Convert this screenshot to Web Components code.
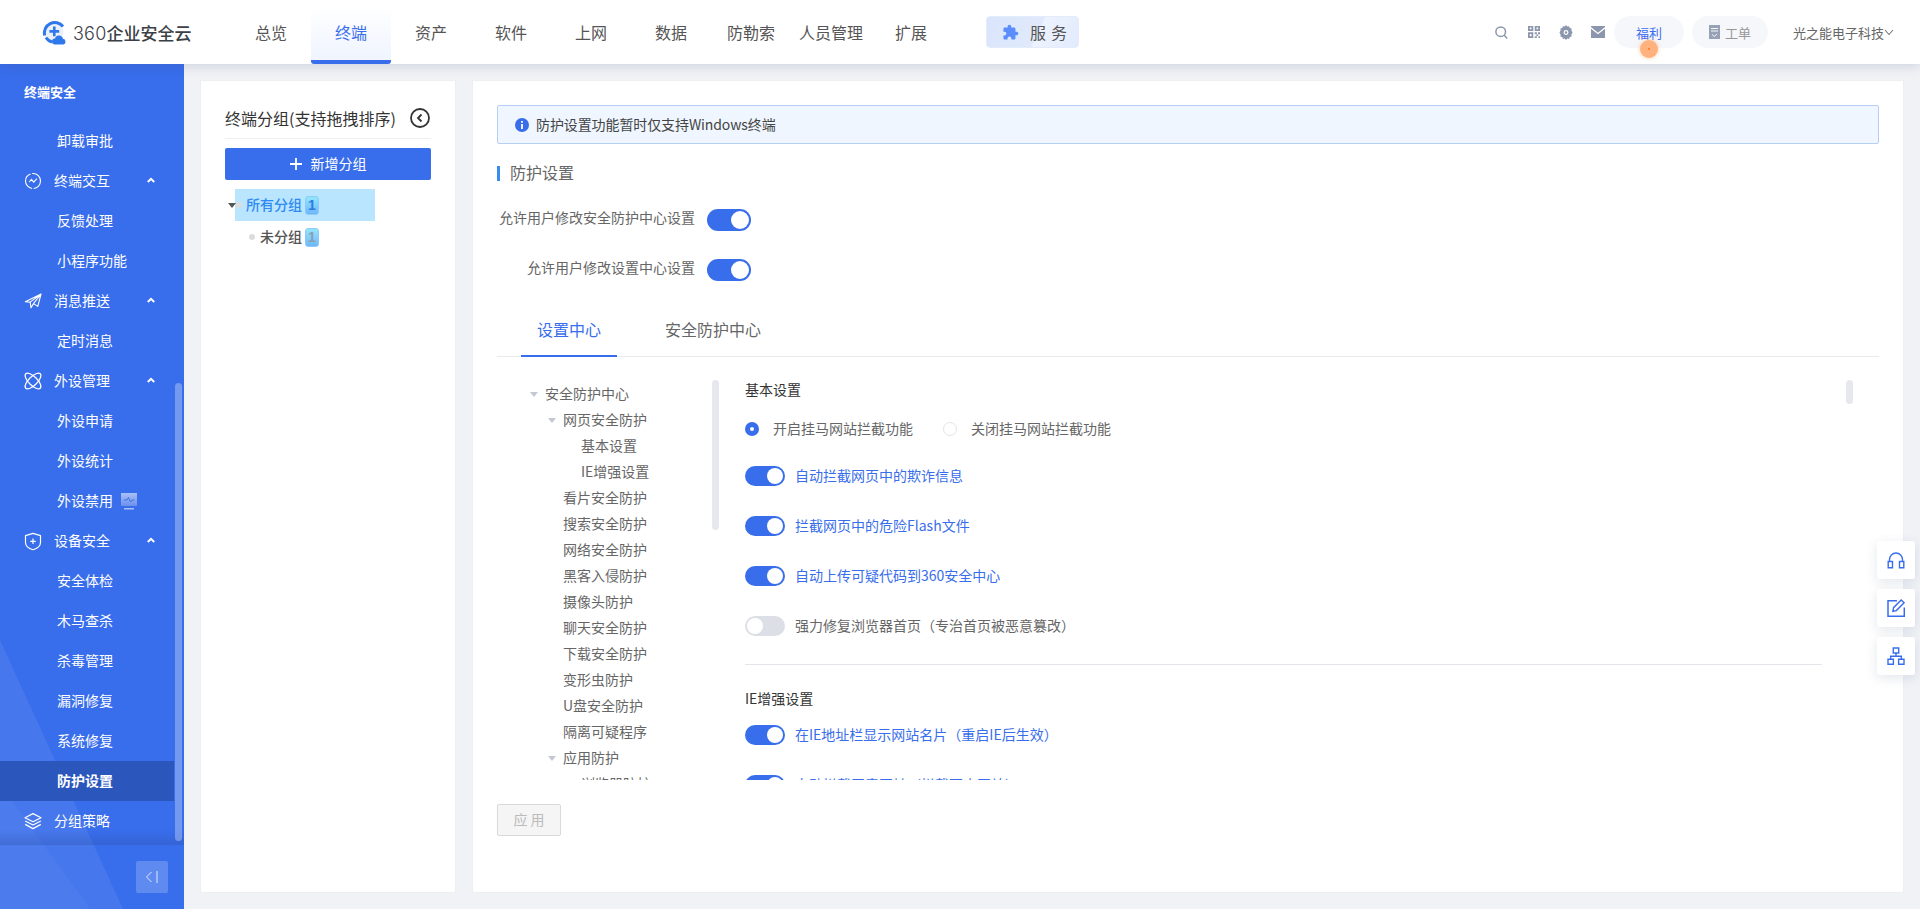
<!DOCTYPE html>
<html lang="zh-CN">
<head>
<meta charset="utf-8">
<title>360企业安全云</title>
<style>
  html, body { margin: 0; height: 100%; overflow: hidden; }
  body {
    font-family: "Noto Sans CJK SC", "Noto Sans", "Liberation Sans", sans-serif;
    font-size: 14px;
    color: #666;
    background: #f0f2f6;
  }
</style>
</head>
<body>
<app-shell>
  <top-bar slot="top">
    <nav-tab>总览</nav-tab>
    <nav-tab active>终端</nav-tab>
    <nav-tab>资产</nav-tab>
    <nav-tab>软件</nav-tab>
    <nav-tab>上网</nav-tab>
    <nav-tab>数据</nav-tab>
    <nav-tab>防勒索</nav-tab>
    <nav-tab>人员管理</nav-tab>
    <nav-tab>扩展</nav-tab>
  </top-bar>

  <side-bar slot="side">
    <side-title>终端安全</side-title>
    <side-item>卸载审批</side-item>
    <side-group icon="pulse">终端交互</side-group>
    <side-item>反馈处理</side-item>
    <side-item>小程序功能</side-item>
    <side-group icon="plane">消息推送</side-group>
    <side-item>定时消息</side-item>
    <side-group icon="atom">外设管理</side-group>
    <side-item>外设申请</side-item>
    <side-item>外设统计</side-item>
    <side-item monitor>外设禁用</side-item>
    <side-group icon="shield">设备安全</side-group>
    <side-item>安全体检</side-item>
    <side-item>木马查杀</side-item>
    <side-item>杀毒管理</side-item>
    <side-item>漏洞修复</side-item>
    <side-item>系统修复</side-item>
    <side-item active>防护设置</side-item>
    <side-group icon="layers" flat>分组策略</side-group>
  </side-bar>

  <group-panel>
    <group-row selected caret>所有分组</group-row>
    <group-row>未分组</group-row>
  </group-panel>

  <settings-panel>
    <notice-bar>防护设置功能暂时仅支持Windows终端</notice-bar>
    <section-head>防护设置</section-head>
    <label-switch>允许用户修改安全防护中心设置</label-switch>
    <label-switch>允许用户修改设置中心设置</label-switch>

    <tab-strip>
      <strip-tab active>设置中心</strip-tab>
      <strip-tab>安全防护中心</strip-tab>
    </tab-strip>

    <split-view>
      <tree-row slot="tree" caret>安全防护中心</tree-row>
      <tree-row slot="tree" level="1" caret>网页安全防护</tree-row>
      <tree-row slot="tree" level="2">基本设置</tree-row>
      <tree-row slot="tree" level="2">IE增强设置</tree-row>
      <tree-row slot="tree" level="1">看片安全防护</tree-row>
      <tree-row slot="tree" level="1">搜索安全防护</tree-row>
      <tree-row slot="tree" level="1">网络安全防护</tree-row>
      <tree-row slot="tree" level="1">黑客入侵防护</tree-row>
      <tree-row slot="tree" level="1">摄像头防护</tree-row>
      <tree-row slot="tree" level="1">聊天安全防护</tree-row>
      <tree-row slot="tree" level="1">下载安全防护</tree-row>
      <tree-row slot="tree" level="1">变形虫防护</tree-row>
      <tree-row slot="tree" level="1">U盘安全防护</tree-row>
      <tree-row slot="tree" level="1">隔离可疑程序</tree-row>
      <tree-row slot="tree" level="1" caret>应用防护</tree-row>
      <tree-row slot="tree" level="2">浏览器防护</tree-row>

      <form-title>基本设置</form-title>
      <radio-row>
        <radio-item checked>开启挂马网站拦截功能</radio-item>
        <radio-item>关闭挂马网站拦截功能</radio-item>
      </radio-row>
      <option-row>自动拦截网页中的欺诈信息</option-row>
      <option-row>拦截网页中的危险Flash文件</option-row>
      <option-row>自动上传可疑代码到360安全中心</option-row>
      <option-row off>强力修复浏览器首页（专治首页被恶意篡改）</option-row>
      <form-rule></form-rule>
      <form-title second>IE增强设置</form-title>
      <option-row>在IE地址栏显示网站名片（重启IE后生效）</option-row>
      <option-row>自动拦截恶意网址（拦截不良网站）</option-row>
    </split-view>

    <apply-button>应 用</apply-button>
  </settings-panel>
</app-shell>

<float-tools>
  <float-tool icon="headset"></float-tool>
  <float-tool icon="edit"></float-tool>
  <float-tool icon="org"></float-tool>
</float-tools>

<script>
const ICONS = {
  pulse: '<circle cx="8" cy="8" r="7.500" fill="none" stroke="currentColor" stroke-width="1.100" stroke-dasharray="11 1.600 20 1.600 13"/><path d="M4.200 9l2.300-2.600 2.200 2.700 3.200-3.400" fill="none" stroke="currentColor" stroke-width="1.100"/>',
  plane: '<path d="M.3 8.700L16 1l-3.200 12.400-4.300-2.800L6 14.800l-.8-5.700zM5.200 9.100L16 1M8.500 10.600L16 1" fill="none" stroke="currentColor" stroke-width="1.100" stroke-linejoin="round"/>',
  atom: '<g fill="none" stroke="currentColor" stroke-width="1.200"><ellipse cx="8" cy="8" rx="4.300" ry="10.300" transform="rotate(45 8 8)"/><ellipse cx="8" cy="8" rx="4.300" ry="10.300" transform="rotate(-45 8 8)"/></g>',
  shield: '<path d="M8 .4l7.500 2.200v6.900c0 3.200-3.200 5.900-7.500 7.200C3.700 15.400.5 12.700.5 9.500V2.600zM8 5.500v5.600M5.200 8.300h5.600" fill="none" stroke="currentColor" stroke-width="1.200" stroke-linejoin="round"/>',
  layers: '<path d="M8 .6l8 4.100-8 4.100-8-4.100zM.2 8L8 12l7.800-4M.2 11.400L8 15.600l7.800-4.200" fill="none" stroke="currentColor" stroke-width="1.200" stroke-linejoin="round"/>',
  headset: '<path d="M2.500 11V8.500a6.500 6.500 0 0 1 13 0V11" fill="none" stroke="currentColor" stroke-width="1.400"/><path d="M1.200 10.500h4.300v6.200H1.200zM12.500 10.500h4.300v6.200h-4.300z" fill="none" stroke="currentColor" stroke-width="1.400"/>',
  edit: '<path d="M10 1.700H1v15.600h16.300V8.500" fill="none" stroke="currentColor" stroke-width="1.500"/><path d="M14.200.9l2.900 2.900-7.700 7.800-3.500.7.600-3.600z" fill="none" stroke="currentColor" stroke-width="1.400"/>',
  org: '<path d="M6.300 1h5.400v5H6.300zM1 12.200h5.400v5H1zM11.600 12.200H17v5h-5.400zM9 6v3.200M3.700 12.200V9.200h10.600v3" fill="none" stroke="currentColor" stroke-width="1.400"/>'
};

class ShadowBase extends HTMLElement {
  constructor() {
    super();
    this.attachShadow({ mode: 'open' });
    this.shadowRoot.innerHTML = this.render();
  }
  render() {
    return '<slot></slot>';
  }
}

class AppShell extends ShadowBase {
  render() {
    return `
    <style>
      :host { display: grid; grid-template: 64px 1fr / 184px 1fr; height: 909px; }
      .top { grid-column: 1 / 3; position: relative; z-index: 3; }
      .side { display: block; height: 845px; }
      main { display: flex; gap: 16px; padding: 16px; min-width: 0; }
    </style>
    <div class="top"><slot name="top"></slot></div>
    <div class="side"><slot name="side"></slot></div>
    <main><slot></slot></main>
    `;
  }
}

class TopBar extends ShadowBase {
  render() {
    return `
    <style>
      :host {
        display: flex;
        align-items: center;
        height: 64px;
        background: #fff;
        box-shadow: 0 3px 10px rgba(70, 85, 120, 0.18);
      }
      .logo { width: 231px; padding-left: 42px; box-sizing: border-box; display: flex; align-items: center; gap: 6px; }
      .logo b { font-weight: 500; font-size: 17px; color: #3b3f46; white-space: nowrap; }
      .logo em { font: 300 18px Inter, "Liberation Sans", sans-serif; letter-spacing: 0.2px; }
      nav { display: flex; align-self: stretch; }
      .service {
        display: flex; align-items: center; gap: 11px;
        margin-left: 35px; height: 32px; width: 93px; padding-left: 15px;
        box-sizing: border-box; border: 1px solid #e4ecfc; border-radius: 4px;
        background: linear-gradient(115deg, #d9e5fc 0%, #e1eafc 55%, #edf3fe 56%, #e2ebfd 100%);
        font-size: 16px; letter-spacing: 5px; color: #555;
      }
      .grow { flex: 1; }
      .tool { width: 32px; display: flex; justify-content: center; color: #8c96ad; }
      .pill {
        position: relative; display: flex; align-items: center; justify-content: center; gap: 5px;
        height: 32px; border-radius: 16px; background: #f5f7fa; font-size: 13px; color: #999;
      }
      .gift { width: 70px; color: #3d6cf0; }
      .ticket { width: 76px; margin-left: 8px; }
      .dot {
        position: absolute; left: 26px; top: 24px; width: 18px; height: 18px; border-radius: 50%;
        background: #ffb27e; box-shadow: 0 0 4px rgba(255, 170, 110, 0.6);
        display: flex; align-items: center; justify-content: center;
      }
      .dot i { width: 2px; height: 2px; background: #f57a20; border-radius: 50%; }
      .user { margin: 0 26px 0 25px; display: flex; align-items: center; font-size: 13px; color: #666; white-space: nowrap; }
    </style>
    <div class="logo">
      <svg width="25" height="25" viewBox="0 0 25 25">
        <circle cx="11.500" cy="11.500" r="10" fill="#eaeff8"/>
        <path d="M2.600 15.500A10.500 10.500 0 0 1 21 6.500" fill="none" stroke="#2f78ec" stroke-width="3"/>
        <path d="M4 17.500a10 10 0 0 0 6 4.500" fill="none" stroke="#2f78ec" stroke-width="3"/>
        <path d="M11 6.500h2.600v3.600h3.600v2.600h-3.600v3.600H11v-3.600H7.400v-2.600H11z" fill="#2f78ec"/>
        <path d="M13 24.500a3 3 0 0 1 0-6c.6-2 2.200-3.200 4-3 2.200 0 3.600 1.300 4 3.200a3 3 0 0 1 .5 5.800z" fill="#2f78ec"/>
      </svg>
      <b><em>360</em>企业安全云</b>
    </div>
    <nav><slot></slot></nav>
    <div class="service">
      <svg width="17" height="17" viewBox="0 0 24 24" fill="#5b8dfb"><path d="M20.500 11H19V7c0-1.100-.9-2-2-2h-4V3.500C13 2.120 11.880 1 10.500 1S8 2.120 8 3.500V5H4c-1.100 0-1.990.9-1.990 2v3.800H3.500c1.490 0 2.700 1.210 2.700 2.700s-1.210 2.700-2.700 2.700H2V20c0 1.100.9 2 2 2h3.800v-1.500c0-1.490 1.210-2.700 2.700-2.700 1.490 0 2.700 1.210 2.700 2.700V22H17c1.100 0 2-.9 2-2v-4h1.500c1.380 0 2.500-1.120 2.500-2.500S21.880 11 20.500 11z"/></svg>
      <span>服务</span>
    </div>
    <div class="grow"></div>
    <div class="tool">
      <svg width="13" height="13" viewBox="0 0 13 13" fill="none" stroke="currentColor" stroke-width="1.500"><circle cx="5.700" cy="5.700" r="4.800"/><path d="M9 9l3.200 3.400"/></svg>
    </div>
    <div class="tool">
      <svg width="12" height="12" viewBox="0 0 12 14" preserveAspectRatio="none" fill="currentColor"><path d="M0 0h5.300v5.700H0zM1.800 1.800v2.100h1.700V1.800zM6.700 0H12v5.700H6.700zM8.500 1.800v2.100h1.700V1.800zM0 7.300h5.300V14H0zM1.800 9.300v2.700h1.700V9.300zM6.700 7.300h2.200v2.400H6.700zM10 7.300h2v2.400h-2zM8.400 10h1.800v1.800H8.400zM6.700 12h2.200v2H6.700zM10.400 12H12v2h-1.600z" fill-rule="evenodd"/></svg>
    </div>
    <div class="tool">
      <svg width="14" height="15" viewBox="0 0 14 16"><path d="M7 0l1.300 1.600 2-.4.7 1.900 2 .6-.3 2L14 8l-1.300 2.300.3 2-2 .6-.7 1.900-2-.4L7 16l-1.300-1.600-2 .4-.7-1.900-2-.6.3-2L0 8l1.300-2.300-.3-2 2-.6.700-1.900 2 .4z" fill="currentColor"/><circle cx="7" cy="8" r="2.600" fill="#fff"/><circle cx="7" cy="8" r="1.300" fill="currentColor"/></svg>
    </div>
    <div class="tool">
      <svg width="14" height="12" viewBox="0 0 14 12" fill="currentColor"><path d="M0 0h14v1L7 6.700 0 1zM0 2.700l7 5.600 7-5.600V12H0z"/><path d="M0 10.600h14V12H0z" opacity=".6"/></svg>
    </div>
    <div class="pill gift">福利<span class="dot"><i></i></span></div>
    <div class="pill ticket">
      <svg width="11" height="14" viewBox="0 0 11 14"><path d="M0 0h11v14H0z" fill="#98a2b6"/><path d="M2 3.500h7M2 6h7M3 9.500l2.300 2L8 9" fill="none" stroke="#f5f7fa" stroke-width="1"/></svg>
      <span>工单</span>
    </div>
    <div class="user">光之能电子科技
      <svg width="10" height="7" viewBox="0 0 10 7" fill="none" stroke="#777" stroke-width="1.100"><path d="M1 1l4 4.500L9 1"/></svg>
    </div>
    `;
  }
}

class NavTab extends ShadowBase {
  render() {
    const active = this.hasAttribute('active');
    return `
    <style>
      :host {
        display: flex; align-items: center; justify-content: center;
        box-sizing: border-box; width: 80px; height: 64px;
        font-size: 16px; white-space: nowrap; color: #555;
        ${active ? `color: #386deb; border-bottom: 4px solid #386deb; padding-top: 4px;
          border-radius: 0 0 3px 3px; background: linear-gradient(180deg, #fff 10%, #eff4ff 100%);` : ''}
      }
    </style>
    <slot></slot>
    `;
  }
}

class SideBar extends ShadowBase {
  render() {
    return `
    <style>
      :host {
        display: flex; flex-direction: column; position: relative;
        height: 845px; background: #386deb; overflow: hidden;
      }
      .art { position: absolute; left: 0; top: 0; }
      .list { position: relative; height: 781px; overflow: hidden; }
      .fade {
        position: absolute; left: 0; right: 0; top: 766px; height: 15px;
        background: linear-gradient(180deg, rgba(44, 80, 170, 0), rgba(44, 80, 170, 0.35));
      }
      .thumb {
        position: absolute; left: 175px; top: 319px; width: 7px; height: 458px;
        border-radius: 4px; background: rgba(255, 255, 255, 0.3);
      }
      .foot { position: relative; flex: 1; display: flex; justify-content: flex-end; padding: 16px 16px 0 0; }
      .fold {
        display: flex; align-items: center; justify-content: center;
        width: 32px; height: 32px; border-radius: 2px; background: rgba(255, 255, 255, 0.2);
      }
    </style>
    <svg class="art" width="184" height="845"><path d="M0 576L123 845H0z" fill="rgba(255,255,255,.07)"/><path d="M0 720L90 845H0z" fill="rgba(255,255,255,.03)"/></svg>
    <div class="list"><slot></slot><div class="fade"></div><div class="thumb"></div></div>
    <div class="foot">
      <div class="fold">
        <svg width="14" height="12" viewBox="0 0 14 12" fill="none" stroke="#dfe8ff" stroke-width="1"><path d="M6.500 1L1.500 6l5 5M12 0v12"/></svg>
      </div>
    </div>
    `;
  }
}

class SideTitle extends ShadowBase {
  render() {
    return `
    <style>
      :host { display: block; height: 57px; line-height: 56px; padding-left: 24px; font-size: 13px; font-weight: 700; color: #fff; }
    </style>
    <slot></slot>
    `;
  }
}

class SideItem extends ShadowBase {
  render() {
    const active = this.hasAttribute('active');
    const monitor = this.hasAttribute('monitor') ? `
      <svg class="mon" width="16" height="17" viewBox="0 0 16 17">
        <defs><linearGradient id="m" x1="0" y1="0" x2="0" y2="1"><stop offset="0" stop-color="#a9c0f7"/><stop offset="1" stop-color="#6b90ee"/></linearGradient></defs>
        <path d="M0 0h16v13H0z" fill="url(#m)"/><path d="M3 15h10v1.500H3z" fill="#a9c0f7"/>
        <path d="M3 7h3l1.500-2.500L9.500 9 11 7h2.500" fill="none" stroke="#3f6fe0" stroke-width="1"/>
      </svg>` : '';
    return `
    <style>
      :host {
        display: flex; align-items: center; box-sizing: border-box; height: 40px; width: 174px;
        padding-left: 57px; color: #fff; white-space: nowrap; position: relative;
        ${active ? 'background: #2b57bd; font-weight: 600;' : ''}
      }
      .t { margin-bottom: 3px; }
      .mon { margin-left: 8px; }
    </style>
    <span class="t"><slot></slot></span>${monitor}
    `;
  }
}

class SideGroup extends ShadowBase {
  render() {
    const chevron = this.hasAttribute('flat') ? '' : `
      <svg class="chev" width="8" height="6" viewBox="0 0 8 6" fill="none" stroke="#fff" stroke-width="2"><path d="M.8 5L4 1.800 7.200 5"/></svg>`;
    return `
    <style>
      :host {
        display: flex; align-items: center; position: relative; box-sizing: border-box;
        height: 40px; width: 174px; padding-left: 25px; color: #fff; white-space: nowrap;
      }
      svg.ic { width: 16px; height: 16px; margin-right: 13px; flex: none; overflow: visible; }
      .t { margin-bottom: 3px; }
      .chev { position: absolute; left: 147px; top: 16px; }
    </style>
    <svg class="ic" viewBox="0 0 16 16">${ICONS[this.getAttribute('icon')]}</svg>
    <span class="t"><slot></slot></span>${chevron}
    `;
  }
}

class GroupPanel extends ShadowBase {
  render() {
    return `
    <style>
      :host {
        display: block; box-sizing: border-box; width: 256px; flex: none; padding: 16px 24px 0;
        background: #fff; border: 1px solid #edeff3;
      }
      .head {
        display: flex; align-items: center; justify-content: space-between;
        height: 41px; border-bottom: 1px solid #eeeff2; font-size: 16px; color: #333;
        white-space: nowrap;
      }
      .add {
        display: flex; align-items: center; justify-content: center; gap: 9px;
        height: 32px; margin: 9px 0 9px; border-radius: 2px; background: #386deb; color: #fff;
      }
      .add span { margin-bottom: 2px; }
    </style>
    <div class="head">
      <span>终端分组(支持拖拽排序)</span>
      <svg width="20" height="20" viewBox="0 0 20 20" fill="none" stroke="#333" style="margin-right:1px">
        <circle cx="10" cy="10" r="9" stroke-width="1.800"/><path d="M11.500 6.500L8 10l3.500 3.500" stroke-width="1.800"/>
      </svg>
    </div>
    <div class="add">
      <svg width="12" height="12" viewBox="0 0 12 12" fill="none" stroke="#fff" stroke-width="1.800"><path d="M6 0v12M0 6h12"/></svg>
      <span>新增分组</span>
    </div>
    <slot></slot>
    `;
  }
}

class GroupRow extends ShadowBase {
  render() {
    const selected = this.hasAttribute('selected');
    return `
    <style>
      :host {
        display: flex; align-items: center; position: relative; box-sizing: border-box;
        width: 140px; height: 32px; margin-left: 10px; font-weight: 500;
        padding-left: ${selected ? 1 : 14}px; color: ${selected ? '#2f8bf3' : '#555'};
        ${selected ? 'background: #b9e5ff;' : ''}
      }
      .t { margin-bottom: 3px; }
      .caret {
        position: absolute; left: -7px; top: 14px; width: 0; height: 0;
        border: 4px solid transparent; border-top: 5px solid #555; border-bottom: 0;
      }
      .dot { width: 6px; height: 6px; border-radius: 50%; background: #dcdcdc; margin-right: ${selected ? 4 : 5}px; }
      .num {
        display: flex; align-items: center; justify-content: center; box-sizing: border-box;
        width: 14px; height: 19px; margin-left: 3px; border-radius: 3px;
        font: 700 14px "Liberation Sans", sans-serif;
        border: 1px solid #8ec9f8; background: linear-gradient(180deg, #92e6fb, #6fb7fb);
        color: ${selected ? '#2a7de0' : '#8d9cb0'};
      }
    </style>
    ${this.hasAttribute('caret') ? '<span class="caret"></span>' : ''}
    <span class="dot"></span><span class="t"><slot></slot></span><span class="num">1</span>
    `;
  }
}

class SettingsPanel extends ShadowBase {
  render() {
    return `
    <style>
      :host {
        display: block; flex: 1; box-sizing: border-box; min-width: 0; padding: 24px;
        background: #fff; border: 1px solid #edeff3;
      }
    </style>
    <slot></slot>
    `;
  }
}

class NoticeBar extends ShadowBase {
  render() {
    return `
    <style>
      :host {
        display: flex; align-items: center; gap: 7px; box-sizing: border-box; height: 39px; padding-left: 17px;
        background: #eff6ff; border: 1px solid #b8cff5; border-radius: 2px; color: #444;
      }
      span { margin-bottom: 2px; letter-spacing: -0.1px; }
    </style>
    <svg width="14" height="14" viewBox="0 0 14 14"><circle cx="7" cy="7" r="7" fill="#386deb"/><path d="M6.100 3h1.800v1.700H6.100zM6.100 5.900h1.800V11H6.100z" fill="#fff"/></svg>
    <span><slot></slot></span>
    `;
  }
}

class SectionHead extends ShadowBase {
  render() {
    return `
    <style>
      :host {
        display: flex; align-items: center; box-sizing: border-box; height: 15px; margin: 22px 0 14px;
        padding-left: 10px; border-left: 3px solid #3b8cf0; font-size: 16px; color: #666;
      }
      span { margin-bottom: 4px; }
    </style>
    <span><slot></slot></span>
    `;
  }
}

class ToggleSwitch extends ShadowBase {
  render() {
    const big = this.hasAttribute('big');
    const w = big ? 44 : 40;
    const h = big ? 22 : 20;
    const off = this.hasAttribute('off');
    return `
    <style>
      :host {
        display: block; flex: none; position: relative; width: ${w}px; height: ${h}px;
        border-radius: ${h / 2}px; background: ${off ? '#dcdfe6' : '#386deb'};
      }
      i {
        position: absolute; top: 2px; ${off ? 'left: 2px' : 'right: 2px'};
        width: ${h - 4}px; height: ${h - 4}px; border-radius: 50%; background: #fff;
      }
    </style>
    <i></i>
    `;
  }
}

class LabelSwitch extends ShadowBase {
  render() {
    return `
    <style>
      :host { display: flex; align-items: center; height: 50px; white-space: nowrap; color: #666; }
      .t { width: 198px; text-align: right; margin-right: 12px; padding-bottom: 6px; }
    </style>
    <span class="t"><slot></slot></span><toggle-switch big></toggle-switch>
    `;
  }
}

class TabStrip extends ShadowBase {
  render() {
    return `
    <style>
      :host {
        display: flex; gap: 32px; box-sizing: border-box; height: 48px; margin-top: 14px;
        padding-left: 24px; border-bottom: 1px solid #e8eaee;
      }
    </style>
    <slot></slot>
    `;
  }
}

class StripTab extends ShadowBase {
  render() {
    const active = this.hasAttribute('active');
    return `
    <style>
      :host {
        display: block; box-sizing: border-box; height: 48px; line-height: 41px; padding: 0 16px;
        font-size: 16px; color: ${active ? '#386deb' : '#666'};
        border-bottom: 2px solid ${active ? '#386deb' : 'transparent'};
      }
    </style>
    <slot></slot>
    `;
  }
}

class SplitView extends ShadowBase {
  render() {
    return `
    <style>
      :host { display: flex; height: 400px; margin-top: 23px; position: relative; overflow: hidden; }
      .tree { width: 222px; flex: none; padding-top: 1px; box-sizing: border-box; position: relative; }
      .form { width: 1077px; margin-left: 26px; flex: none; }
      .bar { position: absolute; width: 7px; top: 0; border-radius: 4px; background: #e6e8ee; }
      .b1 { left: 215px; height: 150px; }
      .b2 { left: 1349px; height: 24px; }
    </style>
    <div class="tree"><slot name="tree"></slot></div>
    <div class="form"><slot></slot></div>
    <div class="bar b1"></div><div class="bar b2"></div>
    `;
  }
}

class TreeRow extends ShadowBase {
  render() {
    const level = Number(this.getAttribute('level') || 0);
    const tri = this.hasAttribute('caret');
    return `
    <style>
      :host {
        display: flex; align-items: center; height: 26px; color: #666; white-space: nowrap;
        padding-left: ${33 + level * 18}px;
      }
      .t { margin-bottom: 3px; }
      i {
        width: 0; height: 0; margin-right: 7px; flex: none;
        border: 4px solid transparent; border-top: 5px solid ${tri ? '#c4c8d0' : 'transparent'}; border-bottom: 0;
      }
    </style>
    <i></i><span class="t"><slot></slot></span>
    `;
  }
}

class FormTitle extends ShadowBase {
  render() {
    const second = this.hasAttribute('second');
    return `
    <style>
      :host {
        display: block; height: ${second ? 21 : 22}px; line-height: ${second ? 18 : 19}px;
        margin-top: ${second ? 24 : 0}px; color: #333;
      }
    </style>
    <slot></slot>
    `;
  }
}

class RadioRow extends ShadowBase {
  render() {
    return `
    <style>
      :host { display: flex; gap: 30px; align-items: center; height: 32px; margin: 11px 0 6px; }
    </style>
    <slot></slot>
    `;
  }
}

class RadioItem extends ShadowBase {
  render() {
    const on = this.hasAttribute('checked');
    return `
    <style>
      :host { display: flex; align-items: center; gap: 14px; color: #666; white-space: nowrap; }
      .t { margin-bottom: 3px; }
      i {
        display: flex; align-items: center; justify-content: center; box-sizing: border-box;
        width: 14px; height: 14px; border-radius: 50%;
        ${on ? 'background: #386deb;' : 'border: 1px solid #e4e4e4;'}
      }
      b { width: 4px; height: 4px; border-radius: 50%; background: #fff; }
    </style>
    <i>${on ? '<b></b>' : ''}</i><span class="t"><slot></slot></span>
    `;
  }
}

class OptionRow extends ShadowBase {
  render() {
    const off = this.hasAttribute('off');
    return `
    <style>
      :host {
        display: flex; align-items: center; gap: 10px; height: 50px; white-space: nowrap;
        color: ${off ? '#666' : '#386deb'};
      }
      .t { margin-bottom: 3px; }
    </style>
    <toggle-switch ${off ? 'off' : ''}></toggle-switch><span class="t"><slot></slot></span>
    `;
  }
}

class FormRule extends ShadowBase {
  render() {
    return `
    <style>
      :host { display: block; height: 1px; margin-top: 13px; background: #e4e6ec; }
    </style>
    `;
  }
}

class ApplyButton extends ShadowBase {
  render() {
    return `
    <style>
      :host {
        display: flex; align-items: center; justify-content: center; box-sizing: border-box;
        width: 64px; height: 32px; margin-top: 24px; border: 1px solid #d9d9d9; border-radius: 2px;
        background: #f5f5f5; color: #bbb;
      }
      span { margin-bottom: 2px; }
    </style>
    <span><slot></slot></span>
    `;
  }
}

class FloatTools extends ShadowBase {
  render() {
    return `
    <style>
      :host { display: flex; flex-direction: column; gap: 10px; position: fixed; right: 5px; top: 541px; z-index: 5; }
    </style>
    <slot></slot>
    `;
  }
}

class FloatTool extends ShadowBase {
  render() {
    return `
    <style>
      :host {
        display: flex; align-items: center; justify-content: center; width: 38px; height: 38px;
        background: #fff; border-radius: 3px; color: #386deb;
        box-shadow: 0 3px 12px rgba(60, 75, 110, 0.14);
      }
    </style>
    <svg width="18" height="18" viewBox="0 0 18 18" style="overflow:visible">${ICONS[this.getAttribute('icon')]}</svg>
    `;
  }
}

customElements.define('app-shell', AppShell);
customElements.define('top-bar', TopBar);
customElements.define('nav-tab', NavTab);
customElements.define('side-bar', SideBar);
customElements.define('side-title', SideTitle);
customElements.define('side-item', SideItem);
customElements.define('side-group', SideGroup);
customElements.define('group-panel', GroupPanel);
customElements.define('group-row', GroupRow);
customElements.define('settings-panel', SettingsPanel);
customElements.define('notice-bar', NoticeBar);
customElements.define('section-head', SectionHead);
customElements.define('toggle-switch', ToggleSwitch);
customElements.define('label-switch', LabelSwitch);
customElements.define('tab-strip', TabStrip);
customElements.define('strip-tab', StripTab);
customElements.define('split-view', SplitView);
customElements.define('tree-row', TreeRow);
customElements.define('form-title', FormTitle);
customElements.define('radio-row', RadioRow);
customElements.define('radio-item', RadioItem);
customElements.define('option-row', OptionRow);
customElements.define('form-rule', FormRule);
customElements.define('apply-button', ApplyButton);
customElements.define('float-tools', FloatTools);
customElements.define('float-tool', FloatTool);
</script>
</body>
</html>
